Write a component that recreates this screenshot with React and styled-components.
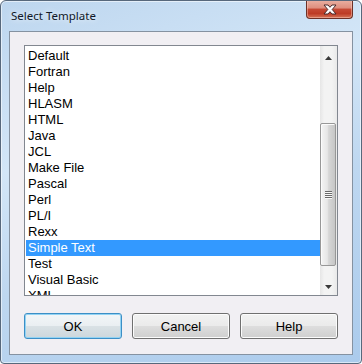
import React from "react";
import styled, { createGlobalStyle } from "styled-components";

const GlobalStyle = createGlobalStyle`
  html, body { margin: 0; padding: 0; background: #ffffff; }
  * { box-sizing: border-box; }
`;

const Window = styled.div`
  width: 362px;
  height: 364px;
  border: 1px solid #57687c;
  border-radius: 6px 6px 4px 4px;
  background: linear-gradient(160deg, #bdd6ef 0%, #d3e6f7 35%, #bed7f0 60%, #abcbec 100%);
  box-shadow: inset 0 0 0 1px rgba(255, 255, 255, 0.55);
  display: flex;
  flex-direction: column;
  padding: 0 8px 8px;
  overflow: hidden;
`;

const TitleBar = styled.div`
  height: 30px;
  display: flex;
  justify-content: space-between;
  align-items: flex-start;
`;

const Title = styled.div`
  font-family: "Noto Sans", "Open Sans", sans-serif;
  font-size: 11.5px;
  color: #101828;
  padding: 7px 0 0 2px;
  line-height: 16px;
  text-shadow: 0 0 6px rgba(255, 255, 255, 0.9);
`;

const CloseButton = styled.div`
  width: 47px;
  height: 19px;
  margin-top: -1px;
  border: 1px solid #6d3127;
  border-top: none;
  border-radius: 0 0 4px 4px;
  background: linear-gradient(#eab1a3 0%, #de8e7d 45%, #c64a35 50%, #bd3b25 75%, #d57456 100%);
  box-shadow: inset 0 0 0 1px rgba(255, 210, 200, 0.45);
  display: flex;
  align-items: center;
  justify-content: center;
`;

const Client = styled.div`
  flex: 1;
  border: 1px solid #8592a1;
  background: #f1eff3;
  padding: 13px 14px 15px;
  display: flex;
  flex-direction: column;
  gap: 17px;
`;

const ListBox = styled.div`
  width: 314px;
  height: 251px;
  border: 1px solid #828790;
  background: #ffffff;
  display: flex;
`;

const Items = styled.div`
  flex: 1;
  overflow: hidden;
  padding: 2px 0 0 1px;
`;

const Item = styled.div`
  height: 16px;
  line-height: 16px;
  padding-left: 2px;
  font-family: "Liberation Sans", Arial, sans-serif;
  font-size: 13px;
  white-space: nowrap;
  color: ${(p) => (p.$selected ? "#ffffff" : "#000000")};
  background: ${(p) => (p.$selected ? "#3399ff" : "transparent")};
`;

const ScrollBar = styled.div`
  width: 17px;
  display: flex;
  flex-direction: column;
  background: linear-gradient(to right, #e6e6e6 0%, #f3f3f3 25%, #f3f3f3 70%, #e9e9e9 100%);
`;

const ArrowButton = styled.div`
  height: 17px;
  display: flex;
  justify-content: center;
  align-items: ${(p) => (p.$down ? "center" : "flex-end")};
  padding-bottom: ${(p) => (p.$down ? "0" : "3px")};
`;

const Track = styled.div`
  flex: 1;
  padding-top: 60px;
`;

const Thumb = styled.div`
  width: 16px;
  height: 143px;
  border: 1px solid #979797;
  border-radius: 2px;
  background: linear-gradient(to right, #f4f4f4 0%, #e6e6e6 45%, #d6d6d6 55%, #c6c6c6 100%);
  box-shadow: inset 1px 1px 0 #fbfbfb;
  display: flex;
  align-items: center;
  justify-content: center;
`;

const Grip = styled.div`
  width: 7px;
  display: flex;
  flex-direction: column;
  gap: 1px;
`;

const GripLine = styled.div`
  height: 1px;
  background: #6a6a6a;
  box-shadow: 0 1px 0 #f8f8f8;
`;

const ButtonRow = styled.div`
  width: 314px;
  display: flex;
  gap: 10px;
`;

const Button = styled.button`
  width: 98px;
  height: 26px;
  padding: 0;
  border: 1px solid ${(p) => (p.$default ? "#3c8fc6" : "#707070")};
  border-radius: 3px;
  background: ${(p) =>
    p.$default
      ? "linear-gradient(#f3f6f8 0%, #eaeff2 48%, #d9e1e5 52%, #cdd7dc 100%)"
      : "linear-gradient(#f2f2f2 0%, #ebebeb 48%, #dddddd 52%, #cfcfcf 100%)"};
  box-shadow: ${(p) =>
    p.$default ? "inset 0 0 0 1px #93d3f3" : "inset 0 0 0 1px #fcfcfc"};
  font-family: "Liberation Sans", Arial, sans-serif;
  font-size: 13px;
  color: #000000;
`;

const items = [
  "Default",
  "Fortran",
  "Help",
  "HLASM",
  "HTML",
  "Java",
  "JCL",
  "Make File",
  "Pascal",
  "Perl",
  "PL/I",
  "Rexx",
  "Simple Text",
  "Test",
  "Visual Basic",
  "XML",
];

const UpArrow = () => (
  <svg width="7" height="4" viewBox="0 0 7 4">
    <path d="M3.5 0 L7 4 L0 4 Z" fill="#3a3a3a" />
  </svg>
);

const DownArrow = () => (
  <svg width="7" height="4" viewBox="0 0 7 4">
    <path d="M0 0 L7 0 L3.5 4 Z" fill="#3a3a3a" />
  </svg>
);

const CloseX = () => (
  <svg width="14" height="11" viewBox="0 0 14 11">
    <path
      d="M1 1 H5 L7 3.3 L9 1 H13 L9.2 5.5 L13 10 H9 L7 7.7 L5 10 H1 L4.8 5.5 Z"
      fill="#ffffff"
      stroke="#4a2a2a"
      strokeWidth="1"
      strokeLinejoin="round"
    />
  </svg>
);

export default function App() {
  return (
    <>
      <GlobalStyle />
      <Window>
        <TitleBar>
          <Title>Select Template</Title>
          <CloseButton>
            <CloseX />
          </CloseButton>
        </TitleBar>
        <Client>
          <ListBox>
            <Items>
              {items.map((it) => (
                <Item key={it} $selected={it === "Simple Text"}>
                  {it}
                </Item>
              ))}
            </Items>
            <ScrollBar>
              <ArrowButton>
                <UpArrow />
              </ArrowButton>
              <Track>
                <Thumb>
                  <Grip>
                    <GripLine />
                    <GripLine />
                    <GripLine />
                    <GripLine />
                  </Grip>
                </Thumb>
              </Track>
              <ArrowButton $down>
                <DownArrow />
              </ArrowButton>
            </ScrollBar>
          </ListBox>
          <ButtonRow>
            <Button $default>OK</Button>
            <Button>Cancel</Button>
            <Button>Help</Button>
          </ButtonRow>
        </Client>
      </Window>
    </>
  );
}
